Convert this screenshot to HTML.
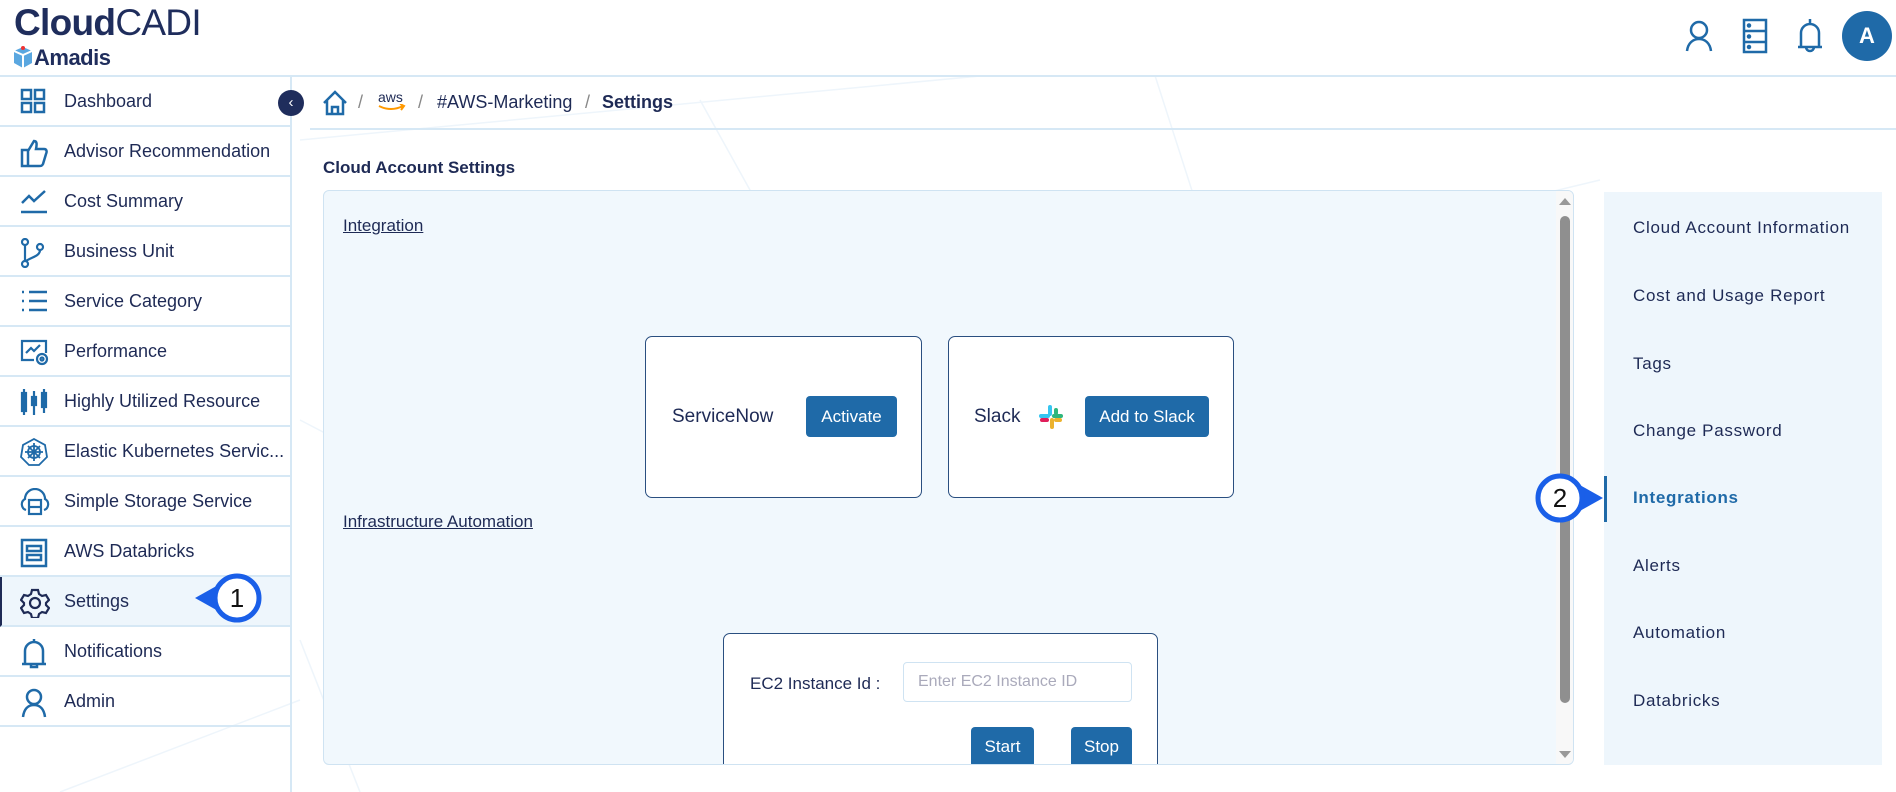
<!DOCTYPE html>
<html><head><meta charset="utf-8"><style>
*{box-sizing:border-box;margin:0;padding:0}
html{width:1896px;height:792px;overflow:hidden}
body{width:1896px;height:792px;overflow:hidden;background:#fff;font-family:"Liberation Sans",sans-serif;color:#1e2a55;position:relative}
.abs{position:absolute}
.hdr{left:0;top:0;width:1896px;height:77px;border-bottom:2px solid #d6e8f5;background:#fff}
.side{left:0;top:77px;width:292px;height:715px;border-right:2px solid #d6e8f5}
.row{position:absolute;left:0;width:290px;height:50px;border-bottom:2px solid #d6e8f5;font-size:18px;line-height:48px;padding-left:64px;white-space:nowrap}
.row svg{position:absolute;left:20px;top:11px}
.rp{left:1604px;top:192px;width:278px;height:573px;background:#eef6fc}
.rp div{position:absolute;left:29px;font-size:17px;letter-spacing:0.7px;color:#1e2a55}
.btn{position:absolute;background:#1f6aa8;color:#fff;font-size:17px;border-radius:4px;text-align:center}
.card{position:absolute;background:#fff;border:1.5px solid #2a4f80;border-radius:7px}
</style></head><body>
<svg class="abs" style="left:0;top:0" width="1896" height="792">
<g stroke="#eef5fb" stroke-width="1.5" fill="none">
<line x1="300" y1="140" x2="1150" y2="60"/><line x1="1150" y1="60" x2="1330" y2="620"/><line x1="300" y1="420" x2="760" y2="660"/><line x1="1100" y1="300" x2="1600" y2="180"/><line x1="60" y1="792" x2="300" y2="700"/><line x1="360" y1="792" x2="300" y2="640"/><line x1="700" y1="100" x2="800" y2="280"/></g></svg>
<div class="abs hdr">
<div class="abs" style="left:14px;top:2px;font-size:37px;letter-spacing:-0.7px;color:#1f2d5c"><b>Cloud</b>CADI</div>
<svg class="abs" style="left:12px;top:45px" width="22" height="25"><path d="M2 6l9-4 9 4v12l-9 5-9-5z" fill="#5aa7e0"/><path d="M11 10v13M2 6l9 4 9-4" stroke="#fff" stroke-width="2" fill="none"/><circle cx="11" cy="3" r="2" fill="#e33"/></svg>
<div class="abs" style="left:34px;top:45px;font-size:22px;font-weight:bold;color:#1f2d5c;letter-spacing:-0.5px">Amadis</div>
<svg class="abs" style="left:1684px;top:20px" width="30" height="32" fill="none" stroke="#1f6aa8" stroke-width="2.5"><circle cx="15" cy="10" r="8"/><path d="M3 31c1-8 6-12 12-12s11 4 12 12"/></svg>
<svg class="abs" style="left:1742px;top:18px" width="26" height="36" fill="none" stroke="#1f6aa8" stroke-width="2.5"><rect x="2" y="2" width="22" height="32"/><path d="M2 13h22M2 24h22"/><circle cx="7" cy="7.5" r="1" fill="#1f6aa8"/><circle cx="7" cy="18.5" r="1" fill="#1f6aa8"/><circle cx="7" cy="29" r="1" fill="#1f6aa8"/></svg>
<svg class="abs" style="left:1796px;top:17px" width="28" height="38" fill="none" stroke="#1f6aa8" stroke-width="2.5"><path d="M14 2v4M5 30V16a9 9 0 0118 0v14M2 30h24M10 30a4 4 0 008 0"/></svg>
<div class="abs" style="left:1842px;top:11px;width:50px;height:50px;border-radius:50%;background:#1f6aa8;color:#fff;font-weight:bold;font-size:22px;text-align:center;line-height:50px">A</div>
</div>
<div class="abs side">
<div class="row" style="top:0">Dashboard<svg width="26" height="26" fill="none" stroke="#1f6aa8" stroke-width="2.5"><rect x="2" y="2" width="9" height="9"/><rect x="15" y="2" width="9" height="9"/><rect x="2" y="15" width="9" height="9"/><rect x="15" y="15" width="9" height="9"/></svg></div>
<div class="row" style="top:50px">Advisor Recommendation<svg width="28" height="30" fill="none" stroke="#1f6aa8" stroke-width="2.5"><path d="M2 12h6v16H2zM8 13l6-10c3 0 3 3 2 8h8c3 0 3 3 2 5l-3 10c-1 2-2 2-4 2H8"/></svg></div>
<div class="row" style="top:100px">Cost Summary<svg width="28" height="26" fill="none" stroke="#1f6aa8" stroke-width="2.5"><path d="M2 15l7-7 5 5 11-10M1 24h26"/></svg></div>
<div class="row" style="top:150px">Business Unit<svg width="26" height="30" fill="none" stroke="#1f6aa8" stroke-width="2.2"><circle cx="5" cy="4" r="3"/><circle cx="5" cy="26" r="3"/><circle cx="20" cy="9" r="3"/><path d="M5 7v16M20 12c0 6-8 7-14 11"/></svg></div>
<div class="row" style="top:200px">Service Category<svg width="28" height="26" fill="none" stroke="#1f6aa8" stroke-width="2.5"><path d="M9 4h18M9 13h18M9 22h18M2 4h2M2 13h2M2 22h2"/></svg></div>
<div class="row" style="top:250px">Performance<svg width="30" height="28" fill="none" stroke="#1f6aa8" stroke-width="2.2"><path d="M14 22H2V3h24v12M6 15l5-5 3 3 6-6"/><circle cx="22" cy="21" r="5"/><circle cx="22" cy="21" r="1.5"/></svg></div>
<div class="row" style="top:300px">Highly Utilized Resource<svg width="28" height="28" fill="none" stroke="#1f6aa8" stroke-width="2.2"><rect x="2" y="5" width="4" height="18"/><rect x="12" y="9" width="4" height="8"/><rect x="22" y="5" width="4" height="14"/><path d="M4 1v26M14 3v24M24 1v24"/></svg></div>
<div class="row" style="top:350px">Elastic Kubernetes Servic...<svg width="28" height="28" fill="none" stroke="#1f6aa8" stroke-width="1.8"><path d="M14 1l11 6 2 12-8 8H9l-8-8 2-12z"/><circle cx="14" cy="14" r="6"/><path d="M14 5v18M5 14h18M8 8l12 12M20 8L8 20"/></svg></div>
<div class="row" style="top:400px">Simple Storage Service<svg width="30" height="28" fill="none" stroke="#1f6aa8" stroke-width="2.2"><path d="M6 22a6 6 0 01-1-11 9 9 0 0120 0 6 6 0 01-1 11"/><rect x="9" y="12" width="12" height="14"/><path d="M9 19h12"/></svg></div>
<div class="row" style="top:450px">AWS Databricks<svg width="28" height="30" fill="none" stroke="#1f6aa8" stroke-width="2.5"><rect x="2" y="2" width="24" height="26"/><rect x="7" y="8" width="14" height="5"/><rect x="7" y="17" width="14" height="5"/></svg></div>
<div class="row" style="top:500px;background:#eef6fc;border-left:2px solid #1e2a55;padding-left:62px">Settings<svg style="left:18px" width="30" height="30" fill="none" stroke="#1e2a55" stroke-width="2.2"><path d="M12 2h6l1 4 3 2 4-1 3 5-3 3v2l3 3-3 5-4-1-3 2-1 4h-6l-1-4-3-2-4 1-3-5 3-3v-2l-3-3 3-5 4 1 3-2z"/><circle cx="15" cy="15" r="5"/></svg></div>
<div class="row" style="top:550px">Notifications<svg width="28" height="32" fill="none" stroke="#1f6aa8" stroke-width="2.5"><path d="M14 1v4M5 26V13a9 9 0 0118 0v13M2 26h24M11 26v3h6v-3"/></svg></div>
<div class="row" style="top:600px">Admin<svg width="28" height="30" fill="none" stroke="#1f6aa8" stroke-width="2.5"><circle cx="14" cy="9" r="7"/><path d="M3 29c1-8 5-12 11-12s10 4 11 12"/></svg></div>
</div>
<div class="abs" style="left:278px;top:90px;width:26px;height:26px;border-radius:50%;background:#1f2d5c;color:#fff;font-size:15px;text-align:center;line-height:25px">‹</div>
<svg class="abs" style="left:322px;top:90px" width="26" height="26" fill="none" stroke="#1f6aa8" stroke-width="2.5"><path d="M2 13L13 2l11 11M5 10v14h16V10M10 24v-7h6v7"/></svg>
<div class="abs" style="left:358px;top:92px;font-size:18px;color:#888">/</div>
<div class="abs" style="left:378px;top:89px;font-size:14px;color:#1e2a55">aws</div>
<svg class="abs" style="left:378px;top:104px" width="28" height="8"><path d="M1 2q12 6 24 0M22 0l4 2-3 4" stroke="#f90" stroke-width="2" fill="none"/></svg>
<div class="abs" style="left:418px;top:92px;font-size:18px;color:#888">/</div>
<div class="abs" style="left:437px;top:92px;font-size:18px">#AWS-Marketing</div>
<div class="abs" style="left:585px;top:92px;font-size:18px;color:#888">/</div>
<div class="abs" style="left:602px;top:92px;font-size:18px;font-weight:bold">Settings</div>
<div class="abs" style="left:310px;top:128px;width:1586px;height:2px;background:#d6e8f5"></div>
<div class="abs" style="left:323px;top:158px;font-size:17px;font-weight:bold">Cloud Account Settings</div>
<div class="abs" style="left:323px;top:190px;width:1251px;height:575px;background:#f1f8fd;border:1.5px solid #cfe3f2;border-radius:6px;overflow:hidden">
<div class="abs" style="left:19px;top:25px;font-size:17px;text-decoration:underline">Integration</div>
<div class="card" style="left:321px;top:145px;width:277px;height:162px"><div class="abs" style="left:26px;top:69px;font-size:19px">ServiceNow</div><div class="btn" style="left:160px;top:59px;width:91px;height:41px;line-height:41px">Activate</div></div>
<div class="card" style="left:624px;top:145px;width:286px;height:162px"><div class="abs" style="left:25px;top:69px;font-size:19px">Slack</div>
<svg class="abs" style="left:89px;top:67px" width="26" height="26"><rect x="10" y="1" width="4" height="11" rx="2" fill="#36c5f0"/><rect x="1" y="10" width="11" height="4" rx="2" fill="#36c5f0"/><rect x="14" y="10" width="11" height="4" rx="2" fill="#2eb67d"/><rect x="12" y="14" width="4" height="11" rx="2" fill="#ecb22e"/><rect x="2" y="14" width="9" height="4" rx="2" fill="#e01e5a"/><rect x="16" y="4" width="4" height="7" rx="2" fill="#2eb67d"/><rect x="16" y="14" width="8" height="4" rx="2" fill="#ecb22e"/></svg>
<div class="btn" style="left:136px;top:59px;width:124px;height:41px;line-height:41px">Add to Slack</div></div>
<div class="abs" style="left:19px;top:321px;font-size:17px;text-decoration:underline">Infrastructure Automation</div>
<div class="card" style="left:399px;top:442px;width:435px;height:200px"><div class="abs" style="left:26px;top:40px;font-size:17px">EC2 Instance Id :</div>
<div class="abs" style="left:179px;top:28px;width:229px;height:40px;border:1.5px solid #cfe3f2;border-radius:4px;background:#fff;font-size:16px;color:#aab;padding:10px 14px">Enter EC2 Instance ID</div>
<div class="btn" style="left:247px;top:93px;width:63px;height:40px;line-height:40px">Start</div>
<div class="btn" style="left:347px;top:93px;width:61px;height:40px;line-height:40px">Stop</div></div>
<div class="abs" style="left:1232px;top:0;width:18px;height:575px;background:#f8f8f8"></div>
<div class="abs" style="left:1236px;top:25px;width:10px;height:487px;border-radius:5px;background:#8f8f8f"></div>
<svg class="abs" style="left:1235px;top:6px" width="12" height="8"><path d="M0 8L6 1l6 7z" fill="#999"/></svg>
<svg class="abs" style="left:1235px;top:560px" width="12" height="8"><path d="M0 0l6 7 6-7z" fill="#999"/></svg>
</div>
<div class="abs rp">
<div style="top:26px">Cloud Account Information</div>
<div style="top:94px">Cost and Usage Report</div>
<div style="top:162px">Tags</div>
<div style="top:229px">Change Password</div>
<div style="top:296px;color:#1f6aa8;font-weight:bold">Integrations</div>
<div style="top:364px">Alerts</div>
<div style="top:431px">Automation</div>
<div style="top:499px">Databricks</div>
<div style="left:0;top:284px;width:3px;height:46px;background:#1f6aa8"></div>
</div>
<svg class="abs" style="left:190px;top:570px" width="80" height="56"><path d="M5 28L30 14 30 42z" fill="#1a5fe8"/><circle cx="47" cy="28" r="22" fill="#fff" stroke="#1a5fe8" stroke-width="5"/><text x="47" y="37" font-family="Liberation Sans" font-size="26" text-anchor="middle" fill="#111">1</text></svg>
<svg class="abs" style="left:1528px;top:470px" width="80" height="56"><path d="M75 28L50 14 50 42z" fill="#1a5fe8"/><circle cx="32" cy="28" r="22" fill="#fff" stroke="#1a5fe8" stroke-width="5"/><text x="32" y="37" font-family="Liberation Sans" font-size="26" text-anchor="middle" fill="#111">2</text></svg>
</body></html>
